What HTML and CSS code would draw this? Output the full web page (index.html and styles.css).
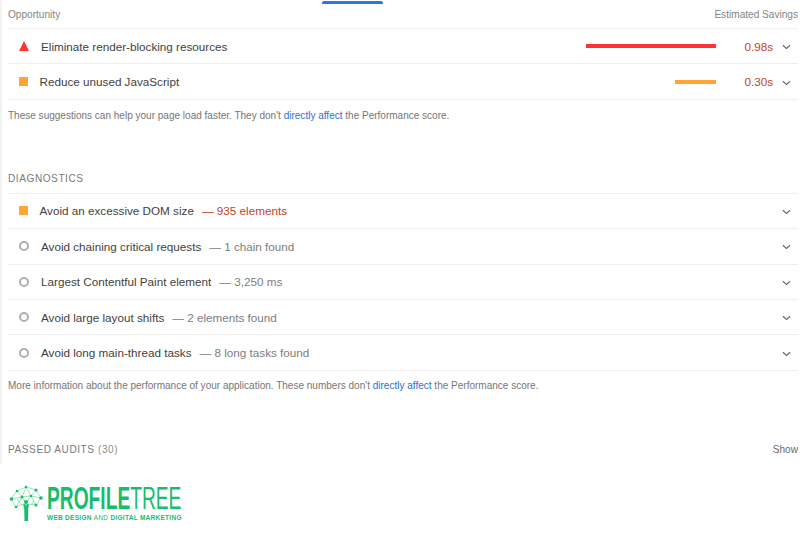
FILE: index.html
```html
<!DOCTYPE html>
<html lang="en">
<head>
<meta charset="utf-8">
<title>Audits</title>
<link rel="stylesheet" href="styles.css">
</head>
<body>
<div class="report">
  <div class="tabbar"><span class="tab-mark"></span></div>
  <div class="head-row"><span>Opportunity</span><span>Estimated Savings</span></div>
  <div class="row">
    <svg class="icon tri" viewBox="0 0 10 10"><path d="M5 0 10 10H0Z"/></svg>
    <span class="title">Eliminate render-blocking resources</span>
    <span class="bar-wrap"><span class="bar bar-red"></span></span>
    <span class="saving">0.98s</span>
    <svg class="chev" viewBox="0 0 10 6"><path d="M1 1 5 4.6 9 1"/></svg>
  </div>
  <div class="row">
    <span class="icon square"></span>
    <span class="title tight">Reduce unused JavaScript</span>
    <span class="bar-wrap"><span class="bar bar-orange"></span></span>
    <span class="saving">0.30s</span>
    <svg class="chev" viewBox="0 0 10 6"><path d="M1 1 5 4.6 9 1"/></svg>
  </div>
  <p class="note note-first">These suggestions can help your page load faster. They don't <a>directly affect</a> the Performance score.</p>

  <h2 class="section">DIAGNOSTICS</h2>
  <div class="row">
    <span class="icon square"></span>
    <span class="title tight">Avoid an excessive DOM size</span>
    <span class="detail warn">— 935 elements</span>
    <svg class="chev end" viewBox="0 0 10 6"><path d="M1 1 5 4.6 9 1"/></svg>
  </div>
  <div class="row">
    <span class="icon circle"></span>
    <span class="title">Avoid chaining critical requests</span>
    <span class="detail">— 1 chain found</span>
    <svg class="chev end" viewBox="0 0 10 6"><path d="M1 1 5 4.6 9 1"/></svg>
  </div>
  <div class="row">
    <span class="icon circle"></span>
    <span class="title">Largest Contentful Paint element</span>
    <span class="detail">— 3,250 ms</span>
    <svg class="chev end" viewBox="0 0 10 6"><path d="M1 1 5 4.6 9 1"/></svg>
  </div>
  <div class="row">
    <span class="icon circle"></span>
    <span class="title">Avoid large layout shifts</span>
    <span class="detail">— 2 elements found</span>
    <svg class="chev end" viewBox="0 0 10 6"><path d="M1 1 5 4.6 9 1"/></svg>
  </div>
  <div class="row">
    <span class="icon circle"></span>
    <span class="title">Avoid long main-thread tasks</span>
    <span class="detail">— 8 long tasks found</span>
    <svg class="chev end" viewBox="0 0 10 6"><path d="M1 1 5 4.6 9 1"/></svg>
  </div>
  <p class="note">More information about the performance of your application. These numbers don't <a>directly affect</a> the Performance score.</p>

  <div class="passed"><span class="passed-label">PASSED AUDITS <span class="count">(30)</span></span><span class="show">Show</span></div>
</div>
<footer class="brand">
  <svg class="tree" viewBox="0 0 34 36">
    <path class="trunk" d="M14 19h2.5l.5 3 .5-3H20l-.7 4-.2 13h-3.6l-.3-13z"/>
    <g class="links">
      <path d="M2 14 8 6 17 2 27 5 32 13 27 20 20 19 14 19 7 22 2 14"/>
      <path d="M8 6 13 12 17 2 22 11 27 5M2 14 13 12 22 11 32 13M13 12 7 22M13 12 17 18M22 11 17 18M22 11 27 20M8 14 13 20M25 15 22 20"/>
    </g>
    <g class="nodes">
      <circle cx="2.5" cy="14" r="1.8"/><circle cx="8" cy="6" r="1.3"/><circle cx="17" cy="2" r="1.3"/><circle cx="27" cy="5" r="1.6"/><circle cx="32" cy="13" r="1.8"/><circle cx="27" cy="20" r="1.5"/><circle cx="7" cy="22" r="1.3"/><circle cx="13" cy="12" r="1.5"/><circle cx="22" cy="11" r="1.3"/><circle cx="17" cy="17" r="2"/>
    </g>
  </svg>
  <div class="brand-text">
    <div class="brand-name"><b>PROFILE</b>TREE</div>
    <div class="brand-sub">WEB DESIGN <i>AND</i> DIGITAL MARKETING</div>
  </div>
</footer>
</body>
</html>
```

FILE: styles.css
```css
* { box-sizing: border-box; }
html, body { margin: 0; padding: 0; }
body {
  width: 800px;
  height: 539px;
  overflow: hidden;
  background: #fff;
  font-family: "Liberation Sans", Arial, sans-serif;
  color: #3c3c3c;
}
.report {
  height: 464px;
  padding: 0 2px 0 6px;
  border-left: 2px solid #f2f2f2;
}
.tabbar { height: 4px; position: relative; }
.tab-mark {
  display: block;
  position: absolute;
  left: 314px;
  top: 1px;
  width: 61px;
  height: 3px;
  background: #2a78e4;
  border-radius: 2px 2px 0 0;
}
.head-row {
  display: flex;
  justify-content: space-between;
  height: 25px;
  padding-top: 5px;
  font-size: 10.1px;
  line-height: 12px;
  color: #858585;
  border-bottom: 1px solid #f0f0f0;
}
.row {
  display: flex;
  align-items: center;
  height: 35.4px;
  font-size: 11.7px;
  border-bottom: 1px solid #eeeeee;
}
.icon { flex: none; display: block; margin-left: 11px; }
.tri { width: 10px; height: 10px; fill: #f33; margin-right: 12px; }
.square { width: 9px; height: 9px; background: #ffa632; margin-right: 12px; }
.circle { width: 10px; height: 10px; border: 2px solid #b0b0b0; border-radius: 50%; margin-right: 12px; }
.title { color: #3f3f3f; white-space: nowrap; }
.tight { margin-left: -0.5px; }
.detail { margin-left: 8px; color: #7d7d7d; white-space: nowrap; }
.warn { color: #c7401f; }
.bar-wrap { margin-left: auto; width: 130px; display: flex; justify-content: flex-end; }
.bar { display: block; height: 4px; }
.bar-red { width: 130px; background: #f33; }
.bar-orange { width: 41px; background: #ffa632; }
.saving { width: 57px; text-align: right; color: #c7401f; }
.chev { flex: none; width: 9px; height: 6px; margin: 2px 7px 0 9px; fill: none; stroke: #6a6a6a; stroke-width: 1.3; }
.chev.end { margin-left: auto; }
.note {
  margin: 0;
  padding-top: 8.5px;
  height: 73.2px;
  font-size: 10.03px;
  line-height: 13px;
  color: #767676;
}
.note-first { height: 72px; padding-top: 9px; }
.note a { color: #2a6fdb; }
.section {
  margin: 0;
  height: 22px;
  padding-top: 1px;
  font-weight: 400;
  font-size: 10.1px;
  line-height: 12px;
  letter-spacing: 0.55px;
  color: #7a7a7a;
  border-bottom: 1px solid #f0f0f0;
}
.passed {
  display: flex;
  justify-content: space-between;
  font-size: 10.1px;
  line-height: 12px;
  color: #7a7a7a;
}
.passed-label { letter-spacing: 0.55px; }
.count { color: #8f8f8f; }
.show { color: #6a6a6a; }
.brand {
  display: flex;
  align-items: flex-start;
  padding: 21px 0 0 9px;
  color: #16bd6c;
}
.tree { flex: none; width: 34px; height: 36px; }
.trunk { fill: #16bd6c; }
.links { fill: none; stroke: #6fd8a4; stroke-width: .7; }
.nodes { fill: #16bd6c; }
.brand-text { margin-left: 4px; }
.brand-name {
  font-size: 32px;
  line-height: 27px;
  width: 135px;
  white-space: nowrap;
  transform: scaleX(.6);
  transform-origin: left center;
}
.brand-name b { font-weight: 700; }
.brand-sub {
  margin-top: 1px;
  font-size: 6.5px;
  line-height: 9px;
  font-weight: 700;
  letter-spacing: .28px;
  white-space: nowrap;
}
.brand-sub i { font-style: normal; font-weight: 400; }
```
